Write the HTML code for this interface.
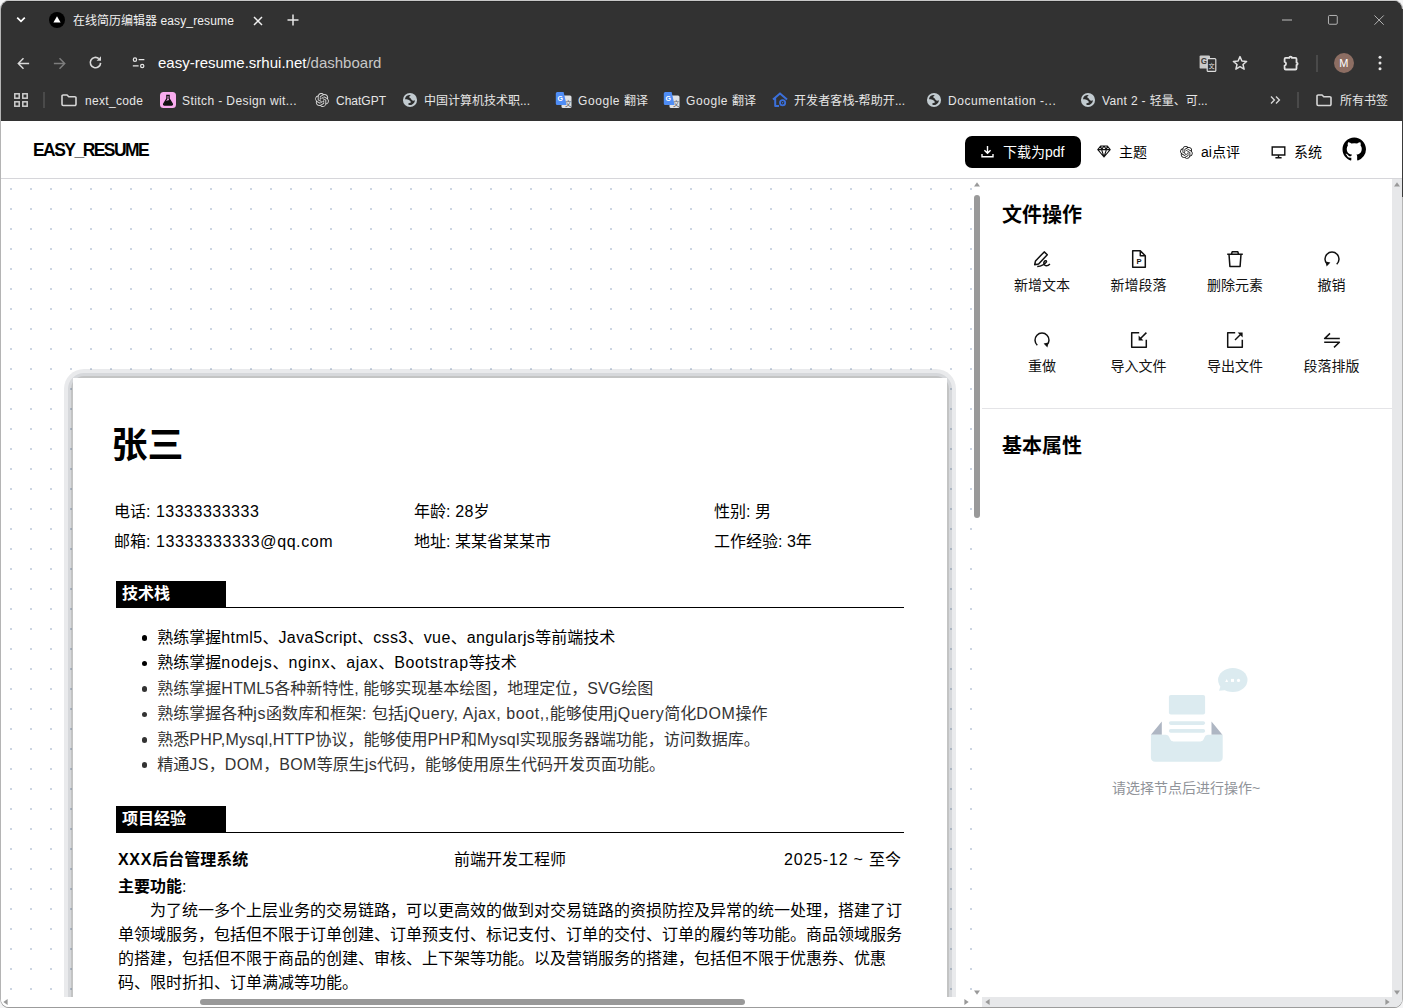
<!DOCTYPE html>
<html lang="zh-CN">
<head>
<meta charset="utf-8">
<title>在线简历编辑器 easy_resume</title>
<style>
*{box-sizing:border-box;margin:0;padding:0}
html,body{width:1403px;height:1008px;overflow:hidden;background:#f4f4f5}
body{position:relative;font-family:"Liberation Sans","Noto Sans CJK SC",sans-serif;color:#000;-webkit-font-smoothing:antialiased}
.abs{position:absolute}
.t{position:absolute;white-space:nowrap;line-height:1}
svg{position:absolute;overflow:visible}
/* window */
#win{position:absolute;left:1px;top:1px;width:1401px;height:1006px;border-radius:8px 8px 8px 8px;background:#fff;overflow:hidden;box-shadow:0 -1px 0 0 #c8c8c8,0 1px 0 0 #9c9c9c,0 0 0 1px #b4b4b4}
#o{position:absolute;left:-1px;top:-1px;width:1403px;height:1008px}
#chrome{position:absolute;left:0;top:0;width:1403px;height:121px;background:#323232}
#chrome .t{color:#e6e6e6;font-size:12px}
.bm{color:#dedede}
/* app */
#hdr{position:absolute;left:0;top:121px;width:1403px;height:58px;background:#fff;border-bottom:1px solid #d6d6da}
#left{position:absolute;left:1px;top:179px;width:972px;height:818px;overflow:hidden;background-color:#fff;background-image:linear-gradient(90deg,#fff 18px,transparent 18px),linear-gradient(#fff 18px,#ccd5e2 18px);background-size:20px 20px;background-position:11px 11px}
#pb1{position:absolute;left:63px;top:190px;width:892px;height:720px;border-radius:20px 20px 0 0;background:rgba(20,30,50,.095)}
#pb2{position:absolute;left:67px;top:194px;width:884px;height:720px;border-radius:16px 16px 0 0;background:rgba(20,30,50,.088)}
#pb3{position:absolute;left:70px;top:197px;width:878px;height:720px;border-radius:13px 13px 0 0;background:rgba(34,16,0,.1)}
#paper{position:absolute;left:72px;top:199px;width:874px;height:700px;background:#fff}
#paper .t{font-size:16px}
#right{position:absolute;left:982px;top:179px;width:410px;height:818px;background:#fff}
.sb{background:#e7e8ea}
.lab{position:absolute;font-size:14px;line-height:1;white-space:nowrap;transform:translateX(-50%);color:#111}
.sec{position:absolute;left:43px;width:788px;height:27px;border-bottom:1.5px solid #000}
.sec b{position:absolute;left:0;top:0;width:110px;height:26px;background:#000;color:#fff;font-size:16px;line-height:26.3px;padding-left:6px;font-weight:700}
ul{position:absolute;left:84.3px;list-style:none}
li{position:relative;height:25.45px;font-size:16px;line-height:25.45px;white-space:nowrap;color:#333}
li:before{content:"";position:absolute;left:-15.8px;top:10.2px;width:5.8px;height:5.8px;border-radius:50%;background:currentColor}
li.k{color:#000}
p.para{position:absolute;left:45px;width:800px;white-space:nowrap;font-size:16px;line-height:24px;text-indent:32px;color:#000}
</style>
</head>
<body>
<div id="win"><div id="o">
<div id="chrome">
<div class="abs" style="left:0;top:1px;width:1403px;height:1px;background:#282828"></div>
<!-- tab strip -->
<svg style="left:16px;top:16px" width="10" height="8" viewBox="0 0 10 8"><path d="M1.2 1.6 L5 5.4 L8.8 1.6" fill="none" stroke="#fff" stroke-width="1.7"/></svg>
<svg style="left:49px;top:12px" width="16" height="16" viewBox="0 0 16 16"><circle cx="8" cy="8" r="8" fill="#000"/><path d="M8 4.3 L11.6 10.6 H4.4 Z" fill="#fff"/></svg>
<span class="t" id="tabt" style="left:73px;top:15px;font-size:12px;color:#f1f1f1">在线简历编辑器<span style="letter-spacing:.13px"> easy_resume</span></span>
<svg style="left:252.5px;top:15.5px" width="10" height="10" viewBox="0 0 10 10"><path d="M1 1 L9 9 M9 1 L1 9" stroke="#f0f0f0" stroke-width="1.5" fill="none"/></svg>
<svg style="left:287px;top:14px" width="12" height="12" viewBox="0 0 12 12"><path d="M6 0.5 V11.5 M0.5 6 H11.5" stroke="#e8e8e8" stroke-width="1.5" fill="none"/></svg>
<!-- window controls -->
<svg style="left:1282px;top:19px" width="12" height="2" viewBox="0 0 12 2"><path d="M0 1 H10" stroke="#bdbdbd" stroke-width="1"/></svg>
<svg style="left:1328px;top:15px" width="10.2" height="10.2" viewBox="0 0 11 11"><rect x="0.5" y="0.5" width="9.5" height="9.5" rx="1.2" fill="none" stroke="#bdbdbd" stroke-width="1"/></svg>
<svg style="left:1374px;top:15px" width="10.2" height="10.2" viewBox="0 0 11 11"><path d="M0.5 0.5 L10.5 10.5 M10.5 0.5 L0.5 10.5" stroke="#bdbdbd" stroke-width="1" fill="none"/></svg>
<!-- toolbar -->
<svg style="left:16.6px;top:56.6px" width="13" height="13" viewBox="0 0 15 15"><path d="M14 7.5 H2 M7.5 1.5 L1.5 7.5 L7.5 13.5" fill="none" stroke="#d9d9d9" stroke-width="1.7"/></svg>
<svg style="left:52.5px;top:56.6px" width="13" height="13" viewBox="0 0 15 15"><path d="M1 7.5 H13 M7.5 1.5 L13.5 7.5 L7.5 13.5" fill="none" stroke="#7d7d7d" stroke-width="1.7"/></svg>
<svg style="left:87.5px;top:55.4px" width="15.3" height="15.3" viewBox="0 0 16 16"><path d="M13.2 8.2 A5.4 5.4 0 1 1 11.4 3.9" fill="none" stroke="#d9d9d9" stroke-width="1.7"/><path d="M13.6 1.4 V6 H9 Z" fill="#d9d9d9"/></svg>
<svg style="left:131.5px;top:57.1px" width="13.2" height="11.55" viewBox="0 0 16 14"><circle cx="3.6" cy="3.2" r="2" fill="none" stroke="#e6e6e6" stroke-width="1.5"/><path d="M8 3.2 H15" stroke="#e6e6e6" stroke-width="1.5"/><circle cx="12.4" cy="10.8" r="2" fill="none" stroke="#e6e6e6" stroke-width="1.5"/><path d="M1 10.8 H8" stroke="#e6e6e6" stroke-width="1.5"/></svg>
<span class="t" id="url" style="left:158px;top:55px;font-size:15px;color:#fff">easy-resume.srhui.net<span style="color:#c8c8c8">/dashboard</span></span>
<!-- translate icon -->
<svg style="left:1199px;top:54.5px" width="18" height="18" viewBox="0 0 18 18"><rect x="0.6" y="0.4" width="10.4" height="13.2" rx="1.2" fill="#c9c9c9"/><text x="1.7" y="9.4" font-size="8.6" font-weight="700" fill="#3a3a3a" font-family="Liberation Sans, sans-serif">G</text><rect x="8.2" y="3.6" width="8.6" height="12.8" rx="1" fill="#323232" stroke="#dcdcdc" stroke-width="1.2"/><text x="9.4" y="13" font-size="6.2" fill="#dcdcdc" font-family="Noto Sans CJK SC, sans-serif">文</text></svg>
<svg style="left:1232px;top:55px" width="16" height="16" viewBox="0 0 16 16"><path d="M8 1.6 L9.9 6 L14.6 6.4 L11 9.5 L12.1 14.2 L8 11.7 L3.9 14.2 L5 9.5 L1.4 6.4 L6.1 6 Z" fill="none" stroke="#e0e0e0" stroke-width="1.5" stroke-linejoin="round"/></svg>
<svg style="left:1281.5px;top:53px" width="18" height="18" viewBox="0 0 18 18"><path d="M2.6 6 Q2.6 4.9 3.7 4.9 H7.3 A1.3 1.3 0 0 1 9.9 4.9 H13.4 Q14.5 4.9 14.5 6 V9.6 A1.15 1.15 0 0 1 14.5 11.9 V15.4 Q14.5 16.5 13.4 16.5 H3.7 Q2.6 16.5 2.6 15.4 V12.6 A1.9 1.9 0 0 0 2.6 8.9 Z" fill="none" stroke="#e2e2e2" stroke-width="1.8" stroke-linejoin="round"/></svg>
<div class="abs" style="left:1316px;top:55px;width:2px;height:17px;background:#4a4a4a"></div>
<div class="abs" style="left:1334px;top:53px;width:20px;height:20px;border-radius:50%;background:#8d6e63"></div>
<span class="t" style="left:1339.3px;top:58px;font-size:11px;color:#fff">M</span>
<svg style="left:1378px;top:55px" width="4" height="16" viewBox="0 0 4 16"><circle cx="2" cy="2.2" r="1.5" fill="#e6e6e6"/><circle cx="2" cy="8" r="1.5" fill="#e6e6e6"/><circle cx="2" cy="13.8" r="1.5" fill="#e6e6e6"/></svg>
<!-- bookmarks -->
<svg style="left:14px;top:93px" width="14" height="14" viewBox="0 0 14 14"><g fill="none" stroke="#cfcfcf" stroke-width="1.5"><rect x="0.8" y="0.8" width="4.4" height="4.4"/><rect x="8.8" y="0.8" width="4.4" height="4.4"/><rect x="0.8" y="8.8" width="4.4" height="4.4"/><rect x="8.8" y="8.8" width="4.4" height="4.4"/></g></svg>
<div class="abs" style="left:43px;top:92px;width:2px;height:16px;background:#4a4a4a"></div>
<svg class="fold" style="left:61px;top:93.8px" width="16" height="12.4" preserveAspectRatio="none" viewBox="0 0 16 13"><path d="M1 2.2 A1.2 1.2 0 0 1 2.2 1 H6 L7.8 2.8 H13.8 A1.2 1.2 0 0 1 15 4 V10.8 A1.2 1.2 0 0 1 13.8 12 H2.2 A1.2 1.2 0 0 1 1 10.8 Z" fill="none" stroke="#d6d6d6" stroke-width="1.6"/></svg>
<span class="t bm" id="b1" style="letter-spacing:.32px;left:85px;top:95px">next_code</span>
<svg style="left:160px;top:92px" width="16" height="16" viewBox="0 0 16 16"><rect width="16" height="16" rx="3.5" fill="#f9acef"/><path d="M6.2 3.3 H9.8 M6.9 3.3 V6.6 L3.7 11.8 A0.8 0.8 0 0 0 4.4 13 H11.6 A0.8 0.8 0 0 0 12.3 11.8 L9.1 6.6 V3.3" fill="none" stroke="#111" stroke-width="1.3"/><path d="M5.4 9.2 L8 8.2 L10 7.9 L12.2 12.2 L11.6 12.9 H4.4 L3.8 12.2 Z" fill="#111"/></svg>
<span class="t bm" id="b2" style="letter-spacing:.41px;left:182px;top:95px">Stitch - Design wit...</span>
<svg style="left:315px;top:93px" width="14" height="14" viewBox="0 0 24 24"><path fill="#dcdcdc" d="M22.2819 9.8211a5.9847 5.9847 0 0 0-.5157-4.9108 6.0462 6.0462 0 0 0-6.5098-2.9A6.0651 6.0651 0 0 0 4.9807 4.1818a5.9847 5.9847 0 0 0-3.9977 2.9 6.0462 6.0462 0 0 0 .7427 7.0966 5.98 5.98 0 0 0 .511 4.9107 6.051 6.051 0 0 0 6.5146 2.9001A5.9847 5.9847 0 0 0 13.2599 24a6.0557 6.0557 0 0 0 5.7718-4.2058 5.9894 5.9894 0 0 0 3.9977-2.9001 6.0557 6.0557 0 0 0-.7475-7.0729zm-9.022 12.6081a4.4755 4.4755 0 0 1-2.8764-1.0408l.1419-.0804 4.7783-2.7582a.7948.7948 0 0 0 .3927-.6813v-6.7369l2.02 1.1686a.071.071 0 0 1 .038.052v5.5826a4.504 4.504 0 0 1-4.4945 4.4944zm-9.6607-4.1254a4.4708 4.4708 0 0 1-.5346-3.0137l.142.0852 4.783 2.7582a.7712.7712 0 0 0 .7806 0l5.8428-3.3685v2.3324a.0804.0804 0 0 1-.0332.0615L9.74 19.9502a4.4992 4.4992 0 0 1-6.1408-1.6464zM2.3408 7.8956a4.485 4.485 0 0 1 2.3655-1.9728V11.6a.7664.7664 0 0 0 .3879.6765l5.8144 3.3543-2.0201 1.1685a.0757.0757 0 0 1-.071 0l-4.8303-2.7865A4.504 4.504 0 0 1 2.3408 7.872zm16.5963 3.8558L13.1038 8.364 15.1192 7.2a.0757.0757 0 0 1 .071 0l4.8303 2.7913a4.4944 4.4944 0 0 1-.6765 8.1042v-5.6772a.79.79 0 0 0-.407-.667zm2.0107-3.0231l-.142-.0852-4.7735-2.7818a.7759.7759 0 0 0-.7854 0L9.409 9.2297V6.8974a.0662.0662 0 0 1 .0284-.0615l4.8303-2.7866a4.4992 4.4992 0 0 1 6.6802 4.66zM8.3065 12.863l-2.02-1.1638a.0804.0804 0 0 1-.038-.0567V6.0742a4.4992 4.4992 0 0 1 7.3757-3.4537l-.142.0805L8.704 5.459a.7948.7948 0 0 0-.3927.6813zm1.0976-2.3654l2.602-1.4998 2.6069 1.4998v2.9994l-2.5974 1.4997-2.6067-1.4997Z"/></svg>
<span class="t bm" id="b3" style="left:336px;top:95px">ChatGPT</span>
<svg class="globe" style="left:403px;top:93px" width="14" height="14" viewBox="0 0 14 14"><circle cx="7" cy="7" r="7.05" fill="#c2cbd0"/><path d="M7.8 2.1 C6 2 4.6 2.2 3.6 2.9 C2.6 3.8 2 5 2.1 6.2 C3.2 6.2 4.4 6.2 5.4 6.7 C6.6 7.2 7.8 8.2 7.9 9.4 C7 10 6 10 5.3 10.5 C5.2 11 5.3 11.5 5.6 11.8 C6.8 12.2 8.2 12 9.2 11.4 C10.4 10.8 11.3 9.8 11.6 8.8 C11.8 8.2 11.9 7.7 11.8 7.3 C11 7.7 10.2 7.8 9.5 7.5 C8.7 7.2 8.2 6.5 7.9 5.8 C7.6 5 6.6 4.8 6.3 4.2 C6.2 3.4 7.2 2.8 7.8 2.1 Z" fill="#2c2c2c"/></svg>
<span class="t bm" id="b4" style="left:424px;top:95px">中国计算机技术职...</span>
<svg class="gt" style="left:555px;top:92px" width="17" height="16" viewBox="0 0 17 16"><rect x="6.5" y="3.5" width="10" height="12.5" rx="1.5" fill="#dfe1e5"/><text x="10" y="13.6" font-size="6.5" fill="#5f6368" font-family="Noto Sans CJK SC, sans-serif">文</text><path d="M2.3 0 H8.6 L11.6 13 H2.3 A1.5 1.5 0 0 1 0.8 11.5 V1.5 A1.5 1.5 0 0 1 2.3 0 Z" fill="#4f8df5"/><text x="2.6" y="8.6" font-size="7" font-weight="700" fill="#fff" font-family="Liberation Sans, sans-serif">G</text></svg>
<span class="t bm" id="b5" style="left:578px;top:95px"><span style="letter-spacing:.57px">Google </span>翻译</span>
<svg class="gt" style="left:663px;top:92px" width="17" height="16" viewBox="0 0 17 16"><rect x="6.5" y="3.5" width="10" height="12.5" rx="1.5" fill="#dfe1e5"/><text x="10" y="13.6" font-size="6.5" fill="#5f6368" font-family="Noto Sans CJK SC, sans-serif">文</text><path d="M2.3 0 H8.6 L11.6 13 H2.3 A1.5 1.5 0 0 1 0.8 11.5 V1.5 A1.5 1.5 0 0 1 2.3 0 Z" fill="#4f8df5"/><text x="2.6" y="8.6" font-size="7" font-weight="700" fill="#fff" font-family="Liberation Sans, sans-serif">G</text></svg>
<span class="t bm" id="b6" style="left:686px;top:95px"><span style="letter-spacing:.57px">Google </span>翻译</span>
<svg style="left:772px;top:92px" width="16" height="16" viewBox="0 0 16 16"><path d="M1 7.4 L8 1.4 L15 7.4 M3.2 6.4 V14 H7" fill="none" stroke="#3b6fd9" stroke-width="2" stroke-linejoin="round"/><circle cx="10.6" cy="10.8" r="2.6" fill="none" stroke="#3b6fd9" stroke-width="1.8"/><circle cx="10.6" cy="10.8" r="0.8" fill="#3b6fd9"/></svg>
<span class="t bm" id="b7" style="letter-spacing:.1px;left:794px;top:95px">开发者客栈-帮助开...</span>
<svg class="globe" style="left:927px;top:93px" width="14" height="14" viewBox="0 0 14 14"><circle cx="7" cy="7" r="7.05" fill="#c2cbd0"/><path d="M7.8 2.1 C6 2 4.6 2.2 3.6 2.9 C2.6 3.8 2 5 2.1 6.2 C3.2 6.2 4.4 6.2 5.4 6.7 C6.6 7.2 7.8 8.2 7.9 9.4 C7 10 6 10 5.3 10.5 C5.2 11 5.3 11.5 5.6 11.8 C6.8 12.2 8.2 12 9.2 11.4 C10.4 10.8 11.3 9.8 11.6 8.8 C11.8 8.2 11.9 7.7 11.8 7.3 C11 7.7 10.2 7.8 9.5 7.5 C8.7 7.2 8.2 6.5 7.9 5.8 C7.6 5 6.6 4.8 6.3 4.2 C6.2 3.4 7.2 2.8 7.8 2.1 Z" fill="#2c2c2c"/></svg>
<span class="t bm" id="b8" style="letter-spacing:.57px;left:948px;top:95px">Documentation -...</span>
<svg class="globe" style="left:1081px;top:93px" width="14" height="14" viewBox="0 0 14 14"><circle cx="7" cy="7" r="7.05" fill="#c2cbd0"/><path d="M7.8 2.1 C6 2 4.6 2.2 3.6 2.9 C2.6 3.8 2 5 2.1 6.2 C3.2 6.2 4.4 6.2 5.4 6.7 C6.6 7.2 7.8 8.2 7.9 9.4 C7 10 6 10 5.3 10.5 C5.2 11 5.3 11.5 5.6 11.8 C6.8 12.2 8.2 12 9.2 11.4 C10.4 10.8 11.3 9.8 11.6 8.8 C11.8 8.2 11.9 7.7 11.8 7.3 C11 7.7 10.2 7.8 9.5 7.5 C8.7 7.2 8.2 6.5 7.9 5.8 C7.6 5 6.6 4.8 6.3 4.2 C6.2 3.4 7.2 2.8 7.8 2.1 Z" fill="#2c2c2c"/></svg>
<span class="t bm" id="b9" style="left:1102px;top:95px"><span style="letter-spacing:.35px">Vant 2 - </span>轻量、可...</span>
<svg style="left:1270px;top:96px" width="11" height="8" viewBox="0 0 11 8"><path d="M1 0.6 L4.4 4 L1 7.4 M6 0.6 L9.4 4 L6 7.4" fill="none" stroke="#d6d6d6" stroke-width="1.4"/></svg>
<div class="abs" style="left:1297px;top:92px;width:2px;height:16px;background:#4a4a4a"></div>
<svg class="fold" style="left:1316px;top:93.8px" width="16" height="12.4" preserveAspectRatio="none" viewBox="0 0 16 13"><path d="M1 2.2 A1.2 1.2 0 0 1 2.2 1 H6 L7.8 2.8 H13.8 A1.2 1.2 0 0 1 15 4 V10.8 A1.2 1.2 0 0 1 13.8 12 H2.2 A1.2 1.2 0 0 1 1 10.8 Z" fill="none" stroke="#d6d6d6" stroke-width="1.6"/></svg>
<span class="t bm" id="b10" style="left:1340px;top:95px">所有书签</span>
</div>
<div id="hdr">
<span class="t" id="logo" style="left:33px;top:20.8px;font-size:17.5px;font-weight:700;letter-spacing:-1.55px">EASY_RESUME</span>
<div class="abs" style="left:965px;top:15px;width:116px;height:32px;border-radius:7px;background:#000"></div>
<svg style="left:981px;top:24px" width="13" height="13" viewBox="0 0 13 13"><path d="M6.5 1 V8 M3.4 5.2 L6.5 8.3 L9.6 5.2 M1 9 V11.8 H12 V9" fill="none" stroke="#fff" stroke-width="1.4"/></svg>
<span class="t" id="dl" style="left:1003px;top:24px;font-size:14px;color:#fff">下载为pdf</span>
<svg style="left:1097px;top:24px" width="14" height="13" viewBox="0 0 14 13"><path d="M3.6 1 H10.4 L13.2 4.6 L7 12 L0.8 4.6 Z M0.8 4.6 H13.2 M4.6 4.6 L7 12 L9.4 4.6 M3.6 1 L4.6 4.6 L7 1 L9.4 4.6 L10.4 1" fill="none" stroke="#111" stroke-width="1.1" stroke-linejoin="round"/></svg>
<span class="t" id="h2" style="left:1119px;top:24px;font-size:14px">主题</span>
<svg style="left:1179.6px;top:25.2px" width="12.8" height="12.8" viewBox="0 0 24 24"><path fill="#111" d="M22.2819 9.8211a5.9847 5.9847 0 0 0-.5157-4.9108 6.0462 6.0462 0 0 0-6.5098-2.9A6.0651 6.0651 0 0 0 4.9807 4.1818a5.9847 5.9847 0 0 0-3.9977 2.9 6.0462 6.0462 0 0 0 .7427 7.0966 5.98 5.98 0 0 0 .511 4.9107 6.051 6.051 0 0 0 6.5146 2.9001A5.9847 5.9847 0 0 0 13.2599 24a6.0557 6.0557 0 0 0 5.7718-4.2058 5.9894 5.9894 0 0 0 3.9977-2.9001 6.0557 6.0557 0 0 0-.7475-7.0729zm-9.022 12.6081a4.4755 4.4755 0 0 1-2.8764-1.0408l.1419-.0804 4.7783-2.7582a.7948.7948 0 0 0 .3927-.6813v-6.7369l2.02 1.1686a.071.071 0 0 1 .038.052v5.5826a4.504 4.504 0 0 1-4.4945 4.4944zm-9.6607-4.1254a4.4708 4.4708 0 0 1-.5346-3.0137l.142.0852 4.783 2.7582a.7712.7712 0 0 0 .7806 0l5.8428-3.3685v2.3324a.0804.0804 0 0 1-.0332.0615L9.74 19.9502a4.4992 4.4992 0 0 1-6.1408-1.6464zM2.3408 7.8956a4.485 4.485 0 0 1 2.3655-1.9728V11.6a.7664.7664 0 0 0 .3879.6765l5.8144 3.3543-2.0201 1.1685a.0757.0757 0 0 1-.071 0l-4.8303-2.7865A4.504 4.504 0 0 1 2.3408 7.872zm16.5963 3.8558L13.1038 8.364 15.1192 7.2a.0757.0757 0 0 1 .071 0l4.8303 2.7913a4.4944 4.4944 0 0 1-.6765 8.1042v-5.6772a.79.79 0 0 0-.407-.667zm2.0107-3.0231l-.142-.0852-4.7735-2.7818a.7759.7759 0 0 0-.7854 0L9.409 9.2297V6.8974a.0662.0662 0 0 1 .0284-.0615l4.8303-2.7866a4.4992 4.4992 0 0 1 6.6802 4.66zM8.3065 12.863l-2.02-1.1638a.0804.0804 0 0 1-.038-.0567V6.0742a4.4992 4.4992 0 0 1 7.3757-3.4537l-.142.0805L8.704 5.459a.7948.7948 0 0 0-.3927.6813zm1.0976-2.3654l2.602-1.4998 2.6069 1.4998v2.9994l-2.5974 1.4997-2.6067-1.4997Z"/></svg>
<span class="t" id="h3" style="left:1201px;top:24px;font-size:14px">ai点评</span>
<svg style="left:1271px;top:25px" width="15" height="13" viewBox="0 0 15 13"><path d="M1.2 1 H13.8 V9 H1.2 Z M7.5 9 V11.6 M4.4 11.8 H10.6" fill="none" stroke="#111" stroke-width="1.4"/></svg>
<span class="t" id="h4" style="left:1294px;top:24px;font-size:14px">系统</span>
<svg style="left:1341.5px;top:16px" width="24.5" height="24.5" viewBox="0 0 24 24"><path fill="#000" d="M12 .5C5.65.5.5 5.65.5 12c0 5.08 3.29 9.39 7.86 10.91.58.1.79-.25.79-.55 0-.27-.01-1.17-.02-2.12-3.2.7-3.87-1.36-3.87-1.36-.52-1.33-1.28-1.68-1.28-1.68-1.04-.71.08-.7.08-.7 1.15.08 1.76 1.18 1.76 1.18 1.03 1.76 2.69 1.25 3.35.96.1-.74.4-1.25.73-1.54-2.55-.29-5.24-1.28-5.24-5.68 0-1.26.45-2.28 1.18-3.09-.12-.29-.51-1.46.11-3.04 0 0 .97-.31 3.16 1.18a11 11 0 0 1 5.76 0c2.2-1.49 3.16-1.18 3.16-1.18.63 1.58.23 2.75.12 3.04.74.81 1.18 1.83 1.18 3.09 0 4.41-2.69 5.38-5.25 5.67.41.36.78 1.06.78 2.13 0 1.54-.01 2.78-.01 3.16 0 .31.21.66.8.55A11.51 11.51 0 0 0 23.5 12C23.5 5.65 18.35.5 12 .5z"/></svg>
</div>
<div id="left">
<div id="pb1"></div><div id="pb2"></div><div id="pb3"></div>
<div id="paper">
<span class="t" id="nm" style="left:38.5px;top:49.8px;font-size:36px;font-weight:700">张三</span>
<span class="t" id="r1a" style="left:41px;top:126px">电话<span style="letter-spacing:0.5px">: 13333333333</span></span>
<span class="t" id="r1b" style="left:341px;top:126px">年龄<span style="letter-spacing:0.2px">: 28</span>岁</span>
<span class="t" id="r1c" style="left:641px;top:126px">性别: 男</span>
<span class="t" id="r2a" style="left:41px;top:156px">邮箱<span style="letter-spacing:0.58px">: 13333333333@qq.com</span></span>
<span class="t" id="r2b" style="left:341px;top:156px">地址: 某某省某某市</span>
<span class="t" id="r2c" style="left:641px;top:156px">工作经验<span style="letter-spacing:0.0px">: 3</span>年</span>
<div class="sec" style="top:203px"><b>技术栈</b></div>
<ul style="top:247px">
<li class="k" id="l1">熟练掌握<span style="letter-spacing:0.4px">html5</span>、<span style="letter-spacing:0.4px">JavaScript</span>、<span style="letter-spacing:0.4px">css3</span>、<span style="letter-spacing:0.4px">vue</span>、<span style="letter-spacing:0.4px">angularjs</span>等前端技术</li>
<li class="k" id="l2">熟练掌握<span style="letter-spacing:0.67px">nodejs</span>、<span style="letter-spacing:0.67px">nginx</span>、<span style="letter-spacing:0.67px">ajax</span>、<span style="letter-spacing:0.67px">Bootstrap</span>等技术</li>
<li id="l3">熟练掌握<span style="letter-spacing:0.07px">HTML5</span>各种新特性<span style="letter-spacing:0.07px">, </span>能够实现基本绘图，地理定位，<span style="letter-spacing:0.07px">SVG</span>绘图</li>
<li id="l4">熟练掌握各种<span style="letter-spacing:0.58px">js</span>函数库和框架<span style="letter-spacing:0.58px">: </span>包括<span style="letter-spacing:0.58px">jQuery, Ajax, boot,,</span>能够使用<span style="letter-spacing:0.58px">jQuery</span>简化<span style="letter-spacing:0.58px">DOM</span>操作</li>
<li id="l5">熟悉<span style="letter-spacing:0.2px">PHP,Mysql,HTTP</span>协议，能够使用<span style="letter-spacing:0.2px">PHP</span>和<span style="letter-spacing:0.2px">Mysql</span>实现服务器端功能，访问数据库。</li>
<li id="l6">精通<span style="letter-spacing:0.37px">JS</span>，<span style="letter-spacing:0.37px">DOM</span>，<span style="letter-spacing:0.37px">BOM</span>等原生<span style="letter-spacing:0.37px">js</span>代码，能够使用原生代码开发页面功能。</li>
</ul>
<div class="sec" style="top:428px"><b>项目经验</b></div>
<span class="t" id="p1" style="left:45px;top:473.5px;font-weight:700"><span style="letter-spacing:0.7px">XXX</span>后台管理系统</span>
<span class="t" id="p2" style="left:381px;top:473.5px">前端开发工程师</span>
<span class="t" id="p3" style="right:46px;top:473.5px"><span style="letter-spacing:0.8px">2025-12 ~ </span>至今</span>
<span class="t" id="p4" style="left:45px;top:500.8px"><b>主要功能</b>:</span>
<p class="para" id="pp" style="top:520.9px">为了统一多个上层业务的交易链路，可以更高效的做到对交易链路的资损防控及异常的统一处理，搭建了订<br>单领域服务，包括但不限于订单创建、订单预支付、标记支付、订单的交付、订单的履约等功能。商品领域服务<br>的搭建，包括但不限于商品的创建、审核、上下架等功能。以及营销服务的搭建，包括但不限于优惠券、优惠<br>码、限时折扣、订单满减等功能。</p>
</div>
</div>
<div id="right">
<span class="t" id="t1" style="left:20px;top:26px;font-size:20px;font-weight:700">文件操作</span>
<span class="lab" id="a1" style="left:60px;top:99px">新增文本</span>
<span class="lab" id="a2" style="left:156.5px;top:99px">新增段落</span>
<span class="lab" id="a3" style="left:253px;top:99px">删除元素</span>
<span class="lab" id="a4" style="left:349.5px;top:99px">撤销</span>
<span class="lab" id="a5" style="left:60px;top:180px">重做</span>
<span class="lab" id="a6" style="left:156.5px;top:180px">导入文件</span>
<span class="lab" id="a7" style="left:253px;top:180px">导出文件</span>
<span class="lab" id="a8" style="left:349.5px;top:180px">段落排版</span>
<svg style="left:51px;top:71.2px" width="18" height="18" viewBox="0 0 18 18"><g fill="none" stroke="#111" stroke-width="1.5" stroke-linejoin="round" stroke-linecap="butt"><path d="M11.2 1.9 L14.3 4.7 L5.6 14.1 L1.7 14.7 L2.5 10.9 Z"/><path d="M4.2 16.6 C8.2 16.2 12.6 13.8 13.4 12 C13.9 10.7 12.3 10.1 11.3 11.5 C10.1 13.3 11.1 15.5 13.1 15.7 C14.7 15.8 16 14.9 16.9 13.9"/></g></svg>
<svg style="left:148px;top:71.2px" width="18" height="18" viewBox="0 0 18 18"><g fill="none" stroke="#111" stroke-width="1.5" stroke-linejoin="round" stroke-linecap="butt"><path d="M2.7 0.8 H10.3 L15.3 5.8 V17.2 H2.7 Z M10.3 0.8 V5.8 H15.3"/><text x="9" y="13.7" font-size="7.6" font-weight="700" text-anchor="middle" fill="#111" stroke="none" font-family="Liberation Sans, sans-serif">P</text></g></svg>
<svg style="left:244px;top:71.2px" width="18" height="18" viewBox="0 0 18 18"><g fill="none" stroke="#111" stroke-width="1.5" stroke-linejoin="round" stroke-linecap="butt"><path d="M1.2 4.2 H16.8 M5.4 4.2 L6.2 1.8 H11.8 L12.6 4.2 M3 4.2 L3.9 16.4 H14.1 L15 4.2"/></g></svg>
<svg style="left:341px;top:71.2px" width="18" height="18" viewBox="0 0 18 18"><g fill="none" stroke="#111" stroke-width="1.5" stroke-linejoin="round" stroke-linecap="butt"><path d="M4.3 14.3 A7 7 0 1 1 13.7 14.3"/><path d="M2.6 11.4 L7.4 12.6 L3.6 16.6 Z" fill="#111" stroke="none"/></g></svg>
<svg style="left:51px;top:152.2px" width="18" height="18" viewBox="0 0 18 18"><g fill="none" stroke="#111" stroke-width="1.5" stroke-linejoin="round" stroke-linecap="butt"><path d="M13.7 14.3 A7 7 0 1 0 4.3 14.3"/><path d="M15.4 11.4 L10.6 12.6 L14.4 16.6 Z" fill="#111" stroke="none"/></g></svg>
<svg style="left:148px;top:152px" width="18" height="18" viewBox="0 0 18 18"><g fill="none" stroke="#111" stroke-width="1.5" stroke-linejoin="round" stroke-linecap="butt"><path d="M9.2 1.7 H1.7 V16.3 H16.3 V8.8"/><path d="M16.4 1.6 L10 8"/><path d="M8.6 4.6 V9.4 H13.4 Z" fill="#111" stroke="none"/></g></svg>
<svg style="left:244px;top:152px" width="18" height="18" viewBox="0 0 18 18"><g fill="none" stroke="#111" stroke-width="1.5" stroke-linejoin="round" stroke-linecap="butt"><path d="M9.2 1.7 H1.7 V16.3 H16.3 V8.8"/><path d="M9 9 L15 3"/><path d="M11.6 1.4 H16.6 V6.4 Z" fill="#111" stroke="none"/></g></svg>
<svg style="left:341px;top:152px" width="18" height="18" viewBox="0 0 18 18"><g fill="none" stroke="#111" stroke-width="1.5" stroke-linejoin="round" stroke-linecap="butt"><path d="M16.8 7.6 H1.6 L7 2.4"/><path d="M1.2 11.2 H16.4 L11 16.4"/></g></svg>
<svg style="left:158px;top:481px" width="110" height="110" viewBox="1140 660 110 110">
<ellipse cx="1232.8" cy="679.9" rx="14.7" ry="12" fill="#dcebf0"/><path d="M1221 685 L1219 690.8 L1227 690 Z" fill="#dcebf0"/>
<path d="M1225.2 681.9 L1226.7 678.9 L1228.2 681.9 Z" fill="#fff"/><rect x="1231" y="678.9" width="3" height="3" fill="#fff"/><circle cx="1238.5" cy="680.4" r="1.6" fill="#fff"/>
<rect x="1168.9" y="694.9" width="36.2" height="19.6" rx="2" fill="#dcebf0"/>
<rect x="1168.9" y="721.2" width="36.2" height="3.7" rx="1.8" fill="#dcebf0"/>
<rect x="1168.9" y="729" width="36.2" height="3.7" rx="1.8" fill="#dcebf0"/>
<path d="M1150.9 734.7 L1161.8 721.6 V734.7 Z M1211.5 721.6 L1222.4 734.7 H1211.5 Z" fill="#aeb6c3"/>
<path d="M1150.9 734.7 H1166 Q1168.6 734.7 1169.4 737.4 L1170 739 Q1170.8 741.4 1173.4 741.4 H1200.4 Q1203 741.4 1203.8 739 L1204.4 737.4 Q1205.2 734.7 1207.8 734.7 H1222.7 V757.3 Q1222.7 761.7 1218.3 761.7 H1155.3 Q1150.9 761.7 1150.9 757.3 Z" fill="#dcebf0"/>
</svg>
<div class="abs" style="left:0;top:229px;width:410px;height:1px;background:#e4e4e7"></div>
<span class="t" id="t2" style="left:20px;top:256.5px;font-size:20px;font-weight:700">基本属性</span>
<span class="lab" id="emp" style="left:204px;top:601.5px;color:#909399">请选择节点后进行操作~</span>
</div>
<!-- scrollbars -->
<div class="abs" style="left:974px;top:195px;width:6px;height:323px;border-radius:3px;background:#999"></div>
<svg style="left:974px;top:181.5px" width="6" height="5" viewBox="0 0 6 5"><path d="M3 0.3 L6 4.6 H0 Z" fill="#999"/></svg>
<svg style="left:974px;top:990px" width="6" height="5" viewBox="0 0 6 5"><path d="M3 4.7 L6 0.4 H0 Z" fill="#999"/></svg>
<div class="abs" style="left:1px;top:997px;width:980px;height:10px;background:#fff"></div>
<div class="abs" style="left:200px;top:999px;width:545px;height:6px;border-radius:3px;background:#999"></div>
<svg style="left:3px;top:999px" width="5" height="6" viewBox="0 0 5 6"><path d="M0.3 3 L4.6 0 V6 Z" fill="#999"/></svg>
<svg style="left:964px;top:999px" width="5" height="6" viewBox="0 0 5 6"><path d="M4.7 3 L0.4 0 V6 Z" fill="#999"/></svg>
<div class="abs sb" style="left:1392px;top:179px;width:10px;height:828px"></div>
<div class="abs sb" style="left:982px;top:997px;width:420px;height:10px"></div>
<svg style="left:1394px;top:181.5px" width="6" height="5" viewBox="0 0 6 5"><path d="M3 0.3 L6 4.6 H0 Z" fill="#999"/></svg>
<svg style="left:1394px;top:990px" width="6" height="5" viewBox="0 0 6 5"><path d="M3 4.7 L6 0.4 H0 Z" fill="#999"/></svg>
<svg style="left:985px;top:999px" width="5" height="6" viewBox="0 0 5 6"><path d="M0.3 3 L4.6 0 V6 Z" fill="#999"/></svg>
<svg style="left:1384.5px;top:999px" width="5" height="6" viewBox="0 0 5 6"><path d="M4.7 3 L0.4 0 V6 Z" fill="#999"/></svg>
</div></div>
<div class="abs" style="left:1402px;top:9px;width:1px;height:188px;background:#3a3a3a"></div>
</body>
</html>
